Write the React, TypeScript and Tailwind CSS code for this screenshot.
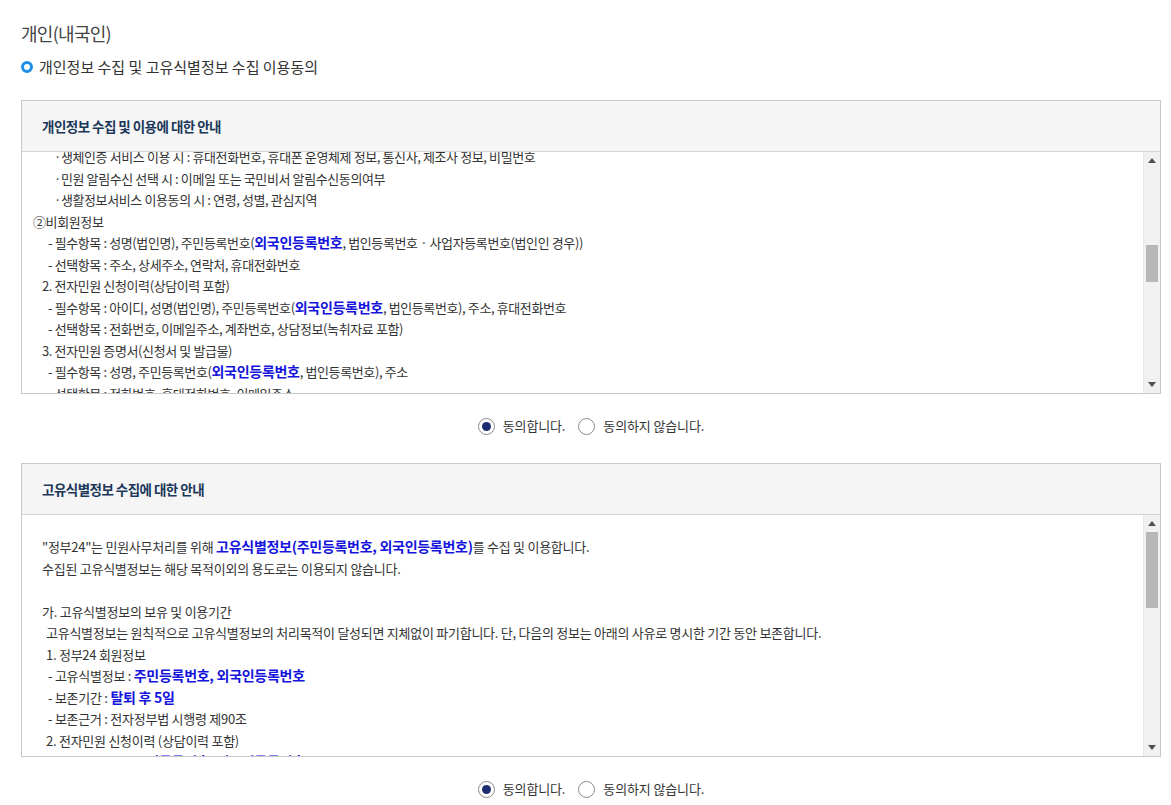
import React from 'react';

type Part = string | { b: string };
type Line = { x: number; parts: Part[] };

const FONT = { fontFamily: '"Noto Sans CJK KR", "Noto Sans", sans-serif' };

const personalLines: Line[] = [
  { x: 32, parts: ['·생체인증 서비스 이용 시 : 휴대전화번호, 휴대폰 운영체제 정보, 통신사, 제조사 정보, 비밀번호'] },
  { x: 32, parts: ['·민원 알림수신 선택 시 : 이메일 또는 국민비서 알림수신동의여부'] },
  { x: 32, parts: ['·생활정보서비스 이용동의 시 : 연령, 성별, 관심지역'] },
  { x: 11, parts: ['②비회원정보'] },
  { x: 26, parts: ['- 필수항목 : 성명(법인명), 주민등록번호(', { b: '외국인등록번호' }, ', 법인등록번호 · 사업자등록번호(법인인 경우))'] },
  { x: 26, parts: ['- 선택항목 : 주소, 상세주소, 연락처, 휴대전화번호'] },
  { x: 20, parts: ['2. 전자민원 신청이력(상담이력 포함)'] },
  { x: 26, parts: ['- 필수항목 : 아이디, 성명(법인명), 주민등록번호(', { b: '외국인등록번호' }, ', 법인등록번호), 주소, 휴대전화번호'] },
  { x: 26, parts: ['- 선택항목 : 전화번호, 이메일주소, 계좌번호, 상담정보(녹취자료 포함)'] },
  { x: 20, parts: ['3. 전자민원 증명서(신청서 및 발급물)'] },
  { x: 26, parts: ['- 필수항목 : 성명, 주민등록번호(', { b: '외국인등록번호' }, ', 법인등록번호), 주소'] },
  { x: 26, parts: ['- 선택항목 : 전화번호, 휴대전화번호, 이메일주소'] },
];

const uniqueLines: Line[] = [
  { x: 20, parts: ['"정부24"는 민원사무처리를 위해 ', { b: '고유식별정보(주민등록번호, 외국인등록번호)' }, '를 수집 및 이용합니다.'] },
  { x: 20, parts: ['수집된 고유식별정보는 해당 목적이외의 용도로는 이용되지 않습니다.'] },
  { x: 20, parts: [''] },
  { x: 20, parts: ['가. 고유식별정보의 보유 및 이용기간'] },
  { x: 24, parts: ['고유식별정보는 원칙적으로 고유식별정보의 처리목적이 달성되면 지체없이 파기합니다. 단, 다음의 정보는 아래의 사유로 명시한 기간 동안 보존합니다.'] },
  { x: 24, parts: ['1. 정부24 회원정보'] },
  { x: 26, parts: ['- 고유식별정보 : ', { b: '주민등록번호, 외국인등록번호' }] },
  { x: 26, parts: ['- 보존기간 : ', { b: '탈퇴 후 5일' }] },
  { x: 26, parts: ['- 보존근거 : 전자정부법 시행령 제90조'] },
  { x: 24, parts: ['2. 전자민원 신청이력 (상담이력 포함)'] },
  { x: 26, parts: ['- 고유식별정보 : ', { b: '주민등록번호, 외국인등록번호' }] },
];

function Scrollbar({ thumbTop, thumbHeight }: { thumbTop: number; thumbHeight: number }) {
  return (
    <div className="w-[17px] shrink-0 bg-[#f1f1f1] border-l border-[#e8e8e8] flex flex-col items-center">
      <div className="h-[17px] w-full flex items-center justify-center">
        <svg width="8" height="5" viewBox="0 0 8 5"><path d="M0 5 L4 0 L8 5 Z" fill="#505050" /></svg>
      </div>
      <div className="flex-1 w-full px-[2px] flex flex-col">
        <div style={{ height: thumbTop }} />
        <div className="w-full bg-[#b8b8b8]" style={{ height: thumbHeight }} />
      </div>
      <div className="h-[17px] w-full flex items-center justify-center">
        <svg width="8" height="5" viewBox="0 0 8 5"><path d="M0 0 L8 0 L4 5 Z" fill="#505050" /></svg>
      </div>
    </div>
  );
}

function TextLine({ line }: { line: Line }) {
  return (
    <div className="h-[21.5px] leading-[21.5px] whitespace-nowrap" style={{ paddingLeft: line.x }}>
      {line.parts.map((p, i) =>
        typeof p === 'string' ? (
          <span key={i}>{p}</span>
        ) : (
          <span key={i} className="font-bold text-[14px] tracking-[-0.02em] text-[#1414dc]">{p.b}</span>
        )
      )}
    </div>
  );
}

function Notice({ title, lines, offset, thumbTop, thumbHeight, tight }: {
  title: string; lines: Line[]; offset: number; thumbTop: number; thumbHeight: number; tight?: boolean;
}) {
  return (
    <div className="border border-[#c9c9c9]">
      <div className="h-[51px] bg-[#f5f5f5] border-b border-[#d4d4d4] flex items-center px-[20px]">
        <h3 className="text-[13.5px] font-bold text-[#1b3759] tracking-[-0.04em]">{title}</h3>
      </div>
      <div className="flex h-[241px] bg-white">
        <div className={tight ? 'flex-1 overflow-hidden text-[13px] text-[#333] tracking-[-0.03em]' : 'flex-1 overflow-hidden text-[13px] text-[#333] tracking-[-0.02em]'}>
          <div style={{ marginTop: offset }}>
            {lines.map((l, i) => <TextLine key={i} line={l} />)}
          </div>
        </div>
        <Scrollbar thumbTop={thumbTop} thumbHeight={thumbHeight} />
      </div>
    </div>
  );
}

function Agree() {
  return (
    <div className="flex justify-center items-center h-[22px] text-[13px] text-[#333] tracking-[-0.01em]">
      <label className="flex items-center gap-[8px]">
        <span className="w-[17px] h-[17px] rounded-full border border-[#8a8a8a] bg-white flex items-center justify-center">
          <span className="w-[9px] h-[9px] rounded-full bg-[#1c2c6e]" />
        </span>
        동의합니다.
      </label>
      <label className="flex items-center gap-[8px] ml-[13px]">
        <span className="w-[17px] h-[17px] rounded-full border border-[#8a8a8a] bg-white" />
        동의하지 않습니다.
      </label>
    </div>
  );
}

export default function App() {
  return (
    <div className="min-h-screen bg-white pl-[21px] pr-[10px] pt-[20px]" style={FONT}>
      <h1 className="text-[18px] text-[#444] leading-[26px] tracking-[-0.04em]">개인(내국인)</h1>
      <div className="flex items-center gap-[6px] mt-[12px] h-[18px]">
        <span className="w-[12px] h-[12px] rounded-full border-[3px] border-[#1e8ee6]" />
        <h2 className="text-[15px] text-[#333]">개인정보 수집 및 고유식별정보 수집 이용동의</h2>
      </div>
      <div className="mt-[24px]">
        <Notice title="개인정보 수집 및 이용에 대한 안내" lines={personalLines} offset={-6} thumbTop={76} thumbHeight={37} tight />
      </div>
      <div className="mt-[21px] mb-[26px]"><Agree /></div>
      <Notice title="고유식별정보 수집에 대한 안내" lines={uniqueLines} offset={21} thumbTop={0} thumbHeight={76} />
      <div className="mt-[21px]"><Agree /></div>
    </div>
  );
}
